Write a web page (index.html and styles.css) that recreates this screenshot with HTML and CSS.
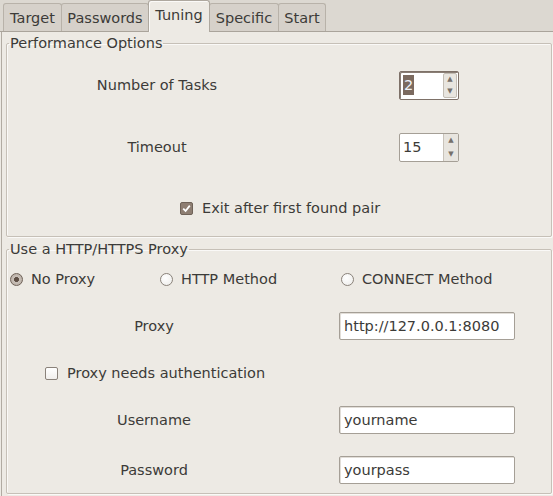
FILE: index.html
```html
<!DOCTYPE html>
<html>
<head>
<meta charset="utf-8">
<link rel="stylesheet" href="styles.css">
</head>
<body>
<div class="notebook">
  <div class="tabs">
    <div class="tab w-target">Target</div>
    <div class="tab w-pass">Passwords</div>
    <div class="tab active w-tuning">Tuning</div>
    <div class="tab w-spec">Specific</div>
    <div class="tab w-start">Start</div>
  </div>
  <div class="page">
    <fieldset class="frame frame-perf">
      <legend>Performance Options</legend>
      <div class="row">
        <div class="label col-a">Number of Tasks</div>
        <div class="spin focused ctl-a">
          <div class="spin-entry"><span class="sel">2</span></div>
          <div class="spin-btns"><span class="arr">▲</span><span class="arr">▼</span></div>
        </div>
      </div>
      <div class="row gap32">
        <div class="label col-a">Timeout</div>
        <div class="spin ctl-a">
          <div class="spin-entry">15</div>
          <div class="spin-btns"><span class="arr">▲</span><span class="arr">▼</span></div>
        </div>
      </div>
      <div class="row gap31">
        <label class="check exit-check"><span class="box checked"><svg width="9" height="9" viewBox="0 0 9 9"><path d="M1.2 4.6 L3.6 7 L7.8 1.6" fill="none" stroke="#fff" stroke-width="1.8"/></svg></span>Exit after first found pair</label>
      </div>
    </fieldset>
    <fieldset class="frame frame-proxy">
      <legend>Use a HTTP/HTTPS Proxy</legend>
      <div class="row radios">
        <label class="radio"><span class="dot on"></span>No Proxy</label>
        <label class="radio"><span class="dot"></span>HTTP Method</label>
        <label class="radio"><span class="dot"></span>CONNECT Method</label>
      </div>
      <div class="row gap17">
        <div class="label col-b">Proxy</div>
        <div class="entry ctl-b">http://127.0.0.1:8080</div>
      </div>
      <div class="row gap17">
        <label class="check auth-check"><span class="box"></span>Proxy needs authentication</label>
      </div>
      <div class="row gap17">
        <div class="label col-b">Username</div>
        <div class="entry ctl-b">yourname</div>
      </div>
      <div class="row gap20">
        <div class="label col-b">Password</div>
        <div class="entry ctl-b">yourpass</div>
      </div>
    </fieldset>
  </div>
</div>
</body>
</html>
```
FILE: styles.css
```css
html, body {
  margin: 0;
  padding: 0;
  background: #edeae4;
}
body {
  font-family: "DejaVu Sans", "Liberation Sans", sans-serif;
  font-size: 14.5px;
  color: #3c3b38;
  width: 553px;
  height: 496px;
  overflow: hidden;
}
.notebook {
  width: 553px;
}
.tabs {
  height: 31px;
  background: #dcd8d1;
  border-bottom: 1px solid #aaa49b;
  display: flex;
  align-items: flex-end;
  padding-left: 3px;
  position: relative;
}
.tab {
  box-sizing: border-box;
  height: 28px;
  border: 1px solid #b8b2a9;
  border-bottom: none;
  border-radius: 3px 3px 0 0;
  background: #d6d1ca;
  display: flex;
  align-items: center;
  justify-content: center;
  padding-top: 1px;
  margin-right: -1px;
}
.tab.active {
  height: 32px;
  margin-bottom: -1px;
  background: #edeae4;
  border-color: #aea89f;
  padding-top: 0;
  padding-bottom: 3px;
  position: relative;
  z-index: 1;
  box-shadow: inset 1px 1px 0 #fbfaf8;
}
.w-target { width: 59px; }
.w-pass { width: 88px; }
.w-tuning { width: 62px; margin-right: 0; }
.w-spec { width: 70px; margin-left: -1px; }
.w-start { width: 48px; }

.page {
  margin-left: 1px;
  width: 550px;
  height: 464px;
  border-left: 1px solid #b1aba2;
  border-right: 1px solid #b1aba2;
  padding: 3px 0 0 4px;
  box-sizing: content-box;
}
.frame {
  margin: 0;
  width: 546px;
  box-sizing: border-box;
  border: 1px solid #c6c0b7;
  border-radius: 2px;
  box-shadow: inset 1px 1px 0 #faf9f7, 1px 1px 0 #faf9f7;
  padding: 0 0 0 2px;
  min-width: 0;
}
.frame legend {
  padding: 0 1px;
  line-height: 16px;
  height: 16px;
}
.frame-perf {
  padding-top: 19px;
  padding-bottom: 13px;
}
.frame-proxy {
  margin-top: 4px;
  padding-top: 7px;
  padding-bottom: 8px;
}
.row {
  height: 30px;
  display: flex;
  align-items: center;
}
.gap32 { margin-top: 32px; }
.gap31 { margin-top: 31px; }
.gap17 { margin-top: 17px; }
.gap20 { margin-top: 20px; }

.label { text-align: center; }
.col-a { width: 296px; }
.ctl-a { margin-left: 94px; }
.col-b { width: 290px; }
.ctl-b { margin-left: 40px; }

.spin {
  display: flex;
  height: 29px;
  box-sizing: border-box;
  width: 60px;
  border: 1px solid #a59f96;
  border-radius: 2px;
  background: #fff;
}
.spin.focused {
  border-color: #7e7168;
  box-shadow: inset 1px 1px 0 #8a7e75;
}
.spin-entry {
  width: 43px;
  box-sizing: border-box;
  padding-left: 3px;
  display: flex;
  align-items: center;
}
.sel {
  background: #7b6a5f;
  color: #eef2f8;
  line-height: 20px;
  padding: 0 1px;
}
.spin-btns {
  flex: 1;
  display: flex;
  flex-direction: column;
  justify-content: space-around;
  align-items: center;
  background: #e8e5df;
  border-left: 1px solid #c9c3ba;
  font-size: 7px;
  color: #75706a;
  line-height: 8px;
}
.spin.focused .spin-btns {
  margin: 1px 1px 1px 0;
  border: 1px solid #c3bdb4;
  border-radius: 2px;
}

.entry {
  width: 176px;
  height: 28px;
  box-sizing: border-box;
  border: 1px solid #a59f96;
  border-radius: 2px;
  background: #fff;
  box-shadow: inset 1px 1px 0 #e2ded8;
  padding-left: 4px;
  display: flex;
  align-items: center;
}

.check, .radio {
  display: flex;
  align-items: center;
}
.exit-check { margin-left: 171px; }
.auth-check { margin-left: 36px; }
.box {
  width: 13px;
  height: 13px;
  box-sizing: border-box;
  border: 1px solid #8a827a;
  border-radius: 2px;
  background: linear-gradient(#ffffff, #f1efec);
  margin-right: 9px;
  display: flex;
  align-items: center;
  justify-content: center;
}
.box.checked {
  background: #8e7e72;
  border-color: #6f6258;
}
.radios {
  margin-left: 1px;
  display: grid;
  grid-template-columns: 150px 181px auto;
  align-items: center;
}
.dot {
  width: 13px;
  height: 13px;
  box-sizing: border-box;
  border: 1px solid #8a827a;
  border-radius: 50%;
  background: radial-gradient(circle at 40% 35%, #ffffff, #ecebe8);
  margin-right: 8px;
  display: inline-block;
}
.dot.on {
  background: radial-gradient(circle, #5e4f45 0 2.2px, #c8bfb7 2.8px, #b3a89e 100%);
  border-color: #6f6258;
}
```
